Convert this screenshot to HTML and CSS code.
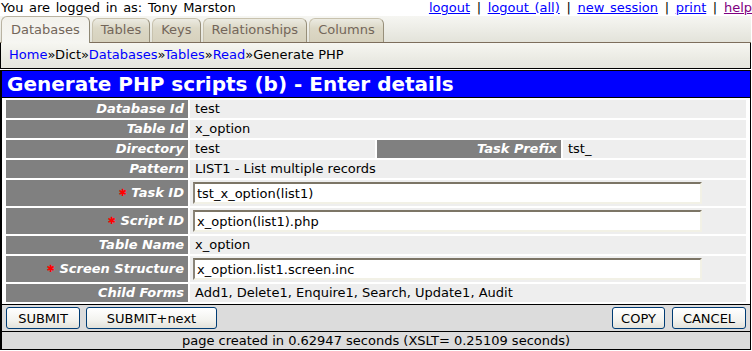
FILE: index.html
```html
<html>
	<head>
		<title>Generate PHP scripts (b) - Enter details</title>
		<meta charset="UTF-8">
		<link rel="stylesheet" href="styles.css">
	</head>
	<body>

		<div class="topbar">
			<span class="user">You are logged in as: Tony Marston</span>
			<span class="links"><a href="#">logout</a> | <a href="#">logout (all)</a> | <a href="#">new session</a> | <a href="#">print</a> | <a href="#" class="visited">help</a></span>
		</div>

		<div class="tabstrip">
			<ul class="tabs">
				<li class="active">Databases</li>
				<li>Tables</li>
				<li>Keys</li>
				<li>Relationships</li>
				<li>Columns</li>
			</ul>
		</div>

		<div class="crumbs">
			<a href="#">Home</a>»Dict»<a href="#">Databases</a>»<a href="#">Tables</a>»<a href="#">Read</a>»Generate PHP
		</div>

		<div class="main">
			<h1 class="title">Generate PHP scripts (b) - Enter details</h1>

			<table class="form">
				<colgroup>
					<col class="c1"><col class="c2"><col class="c3"><col class="c4">
				</colgroup>
				<tr>
					<td class="label">Database Id</td>
					<td class="value" colspan="3">test</td>
				</tr><tr>
					<td class="label">Table Id</td>
					<td class="value" colspan="3">x_option</td>
				</tr><tr>
					<td class="label">Directory</td>
					<td class="value">test</td>
					<td class="label">Task Prefix</td>
					<td class="value">tst_</td>
				</tr><tr>
					<td class="label">Pattern</td>
					<td class="value" colspan="3">LIST1 - List multiple records</td>
				</tr><tr>
					<td class="label"><span class="req">✱</span> Task ID</td>
					<td class="value field" colspan="3"><input type="text" class="input" value="tst_x_option(list1)"></td>
				</tr><tr>
					<td class="label"><span class="req">✱</span> Script ID</td>
					<td class="value field" colspan="3"><input type="text" class="input" value="x_option(list1).php"></td>
				</tr><tr>
					<td class="label">Table Name</td>
					<td class="value" colspan="3">x_option</td>
				</tr><tr>
					<td class="label"><span class="req">✱</span> Screen Structure</td>
					<td class="value field" colspan="3"><input type="text" class="input" value="x_option.list1.screen.inc"></td>
				</tr><tr>
					<td class="label">Child Forms</td>
					<td class="value" colspan="3">Add1, Delete1, Enquire1, Search, Update1, Audit</td>
				</tr>
			</table>

			<div class="actions">
				<div class="left">
					<input type="submit" class="btn b_submit" value="SUBMIT">
					<input type="submit" class="btn b_next" value="SUBMIT+next">
				</div>
				<div class="right">
					<input type="submit" class="btn b_copy" value="COPY">
					<input type="submit" class="btn b_cancel" value="CANCEL">
				</div>
			</div>

			<div class="footer">page created in 0.62947 seconds (XSLT= 0.25109 seconds)</div>
		</div>

	</body>
</html>
```

FILE: styles.css
```css
body {
	margin: 0px;
	padding: 0px;
	font-family: 'DejaVu Sans', Verdana, sans-serif;
	font-size: 13px;
	color: black;
	background-color: white;
}

/* top line */
.topbar {
	display: flex;
	justify-content: space-between;
	height: 16px;
	line-height: 15px;
	padding-left: 1px;
	white-space: nowrap;
	overflow: hidden;
	word-spacing: 1.5px;
}
.topbar .links {
	word-spacing: 2.5px;
}
.topbar a {
	color: #0000ff;
	word-spacing: 1.5px;
}
.topbar a.visited {
	color: #800080;
}

/* tabs */
.tabstrip {
	height: 26px;
	background: linear-gradient(#f6f6f2, #e3e3da);
	border-bottom: 1px solid #7d6e5c;
	margin-right: 1px;
}
.tabs {
	display: flex;
	gap: 2px;
	margin: 0px;
	padding: 0px 0px 0px 1px;
	list-style: none;
	height: 26px;
	align-items: flex-end;
}
.tabs li {
	height: 23px;
	line-height: 22px;
	padding: 0px 8px 0px 8px;
	color: #73665a;
	background: linear-gradient(#ecebe2, #dcd8c6 40%, #d6d1bd);
	border: 1px solid #c8c2ae;
	border-bottom: none;
	border-right: 1px solid #978f7a;
	border-radius: 6px 6px 0px 0px;
	font-size: 13px;
}
.tabs li.active {
	height: 25px;
	line-height: 26px;
	padding: 0px 9px 1px 9px;
	background: linear-gradient(#f3f2ec, #f6f6f2);
	border-color: #b9b3a2;
	border-right-color: #8f8874;
	margin-bottom: -1px;
}

/* breadcrumbs */
.crumbs {
	height: 25px;
	line-height: 24px;
	padding-left: 8px;
	background: linear-gradient(#f6f6f1, #ebebe4 60%, #e6e6de);
	border-left: 1px solid black;
	border-right: 1px solid black;
	border-bottom: 1px solid black;
	margin-right: 1px;
	margin-bottom: 1px;
}
.crumbs a {
	color: #0000ff;
	text-decoration: none;
}

/* main form */
.main {
	border: 1px solid black;
	border-left-width: 2px;
	margin-right: 1px;
}
.title {
	margin: 0px;
	height: 26px;
	line-height: 26px;
	padding-left: 5px;
	background-color: #0000ff;
	color: white;
	font-size: 20px;
	font-weight: bold;
	border-bottom: 1px solid black;
	white-space: nowrap;
}

table.form {
	table-layout: fixed;
	border-spacing: 2px;
	margin: 0px 1px 0px 2px;
	width: 744px;
	font-size: 13px;
}
col.c1 { width: 182px; }
col.c2 { width: 185px; }
col.c3 { width: 184px; }
col.c4 { width: 183px; }

td {
	padding: 0px 4px;
	height: 18px;
	line-height: 16px;
	white-space: nowrap;
}
td.label {
	background-color: #808080;
	color: white;
	font-weight: bold;
	font-style: italic;
	text-align: right;
}
td.value {
	background-color: #eeeeee;
	padding-left: 5px;
}
td.field {
	height: 26px;
	padding: 0px 3px;
}
.req {
	color: #ff0000;
	font-style: normal;
	font-size: 10px;
	vertical-align: 1px;
}
.input {
	box-sizing: border-box;
	width: 509px;
	height: 22px;
	margin: 0px;
	padding: 0px 2px;
	font-family: 'DejaVu Sans', Verdana, sans-serif;
	font-size: 13px;
	color: black;
	background-color: white;
	border: 2px solid;
	border-color: #7c7566 #f2f1e6 #f2f1e6 #8a8478;
	outline: none;
}

/* buttons */
.actions {
	display: flex;
	justify-content: space-between;
	height: 26px;
	align-items: center;
	padding: 0px 4px;
	background-color: #dcdcdc;
	border-top: 1px solid black;
	border-bottom: 1px solid black;
}
.left, .right {
	display: flex;
	gap: 7px;
}
.left {
	gap: 6px;
}
.btn {
	height: 22px;
	margin: 0px;
	padding: 0px;
	font-family: 'DejaVu Sans', Verdana, sans-serif;
	font-size: 13px;
	color: black;
	background: linear-gradient(#ffffff, #f3f3ef 60%, #e3e2da);
	border: 1px solid #003c74;
	border-radius: 3px;
}
.b_submit { width: 74px; }
.b_next { width: 131px; }
.b_copy { width: 53px; }
.b_cancel { width: 74px; }

.footer {
	height: 17px;
	line-height: 17px;
	text-align: center;
	background-color: #dcdcdc;
}
```
